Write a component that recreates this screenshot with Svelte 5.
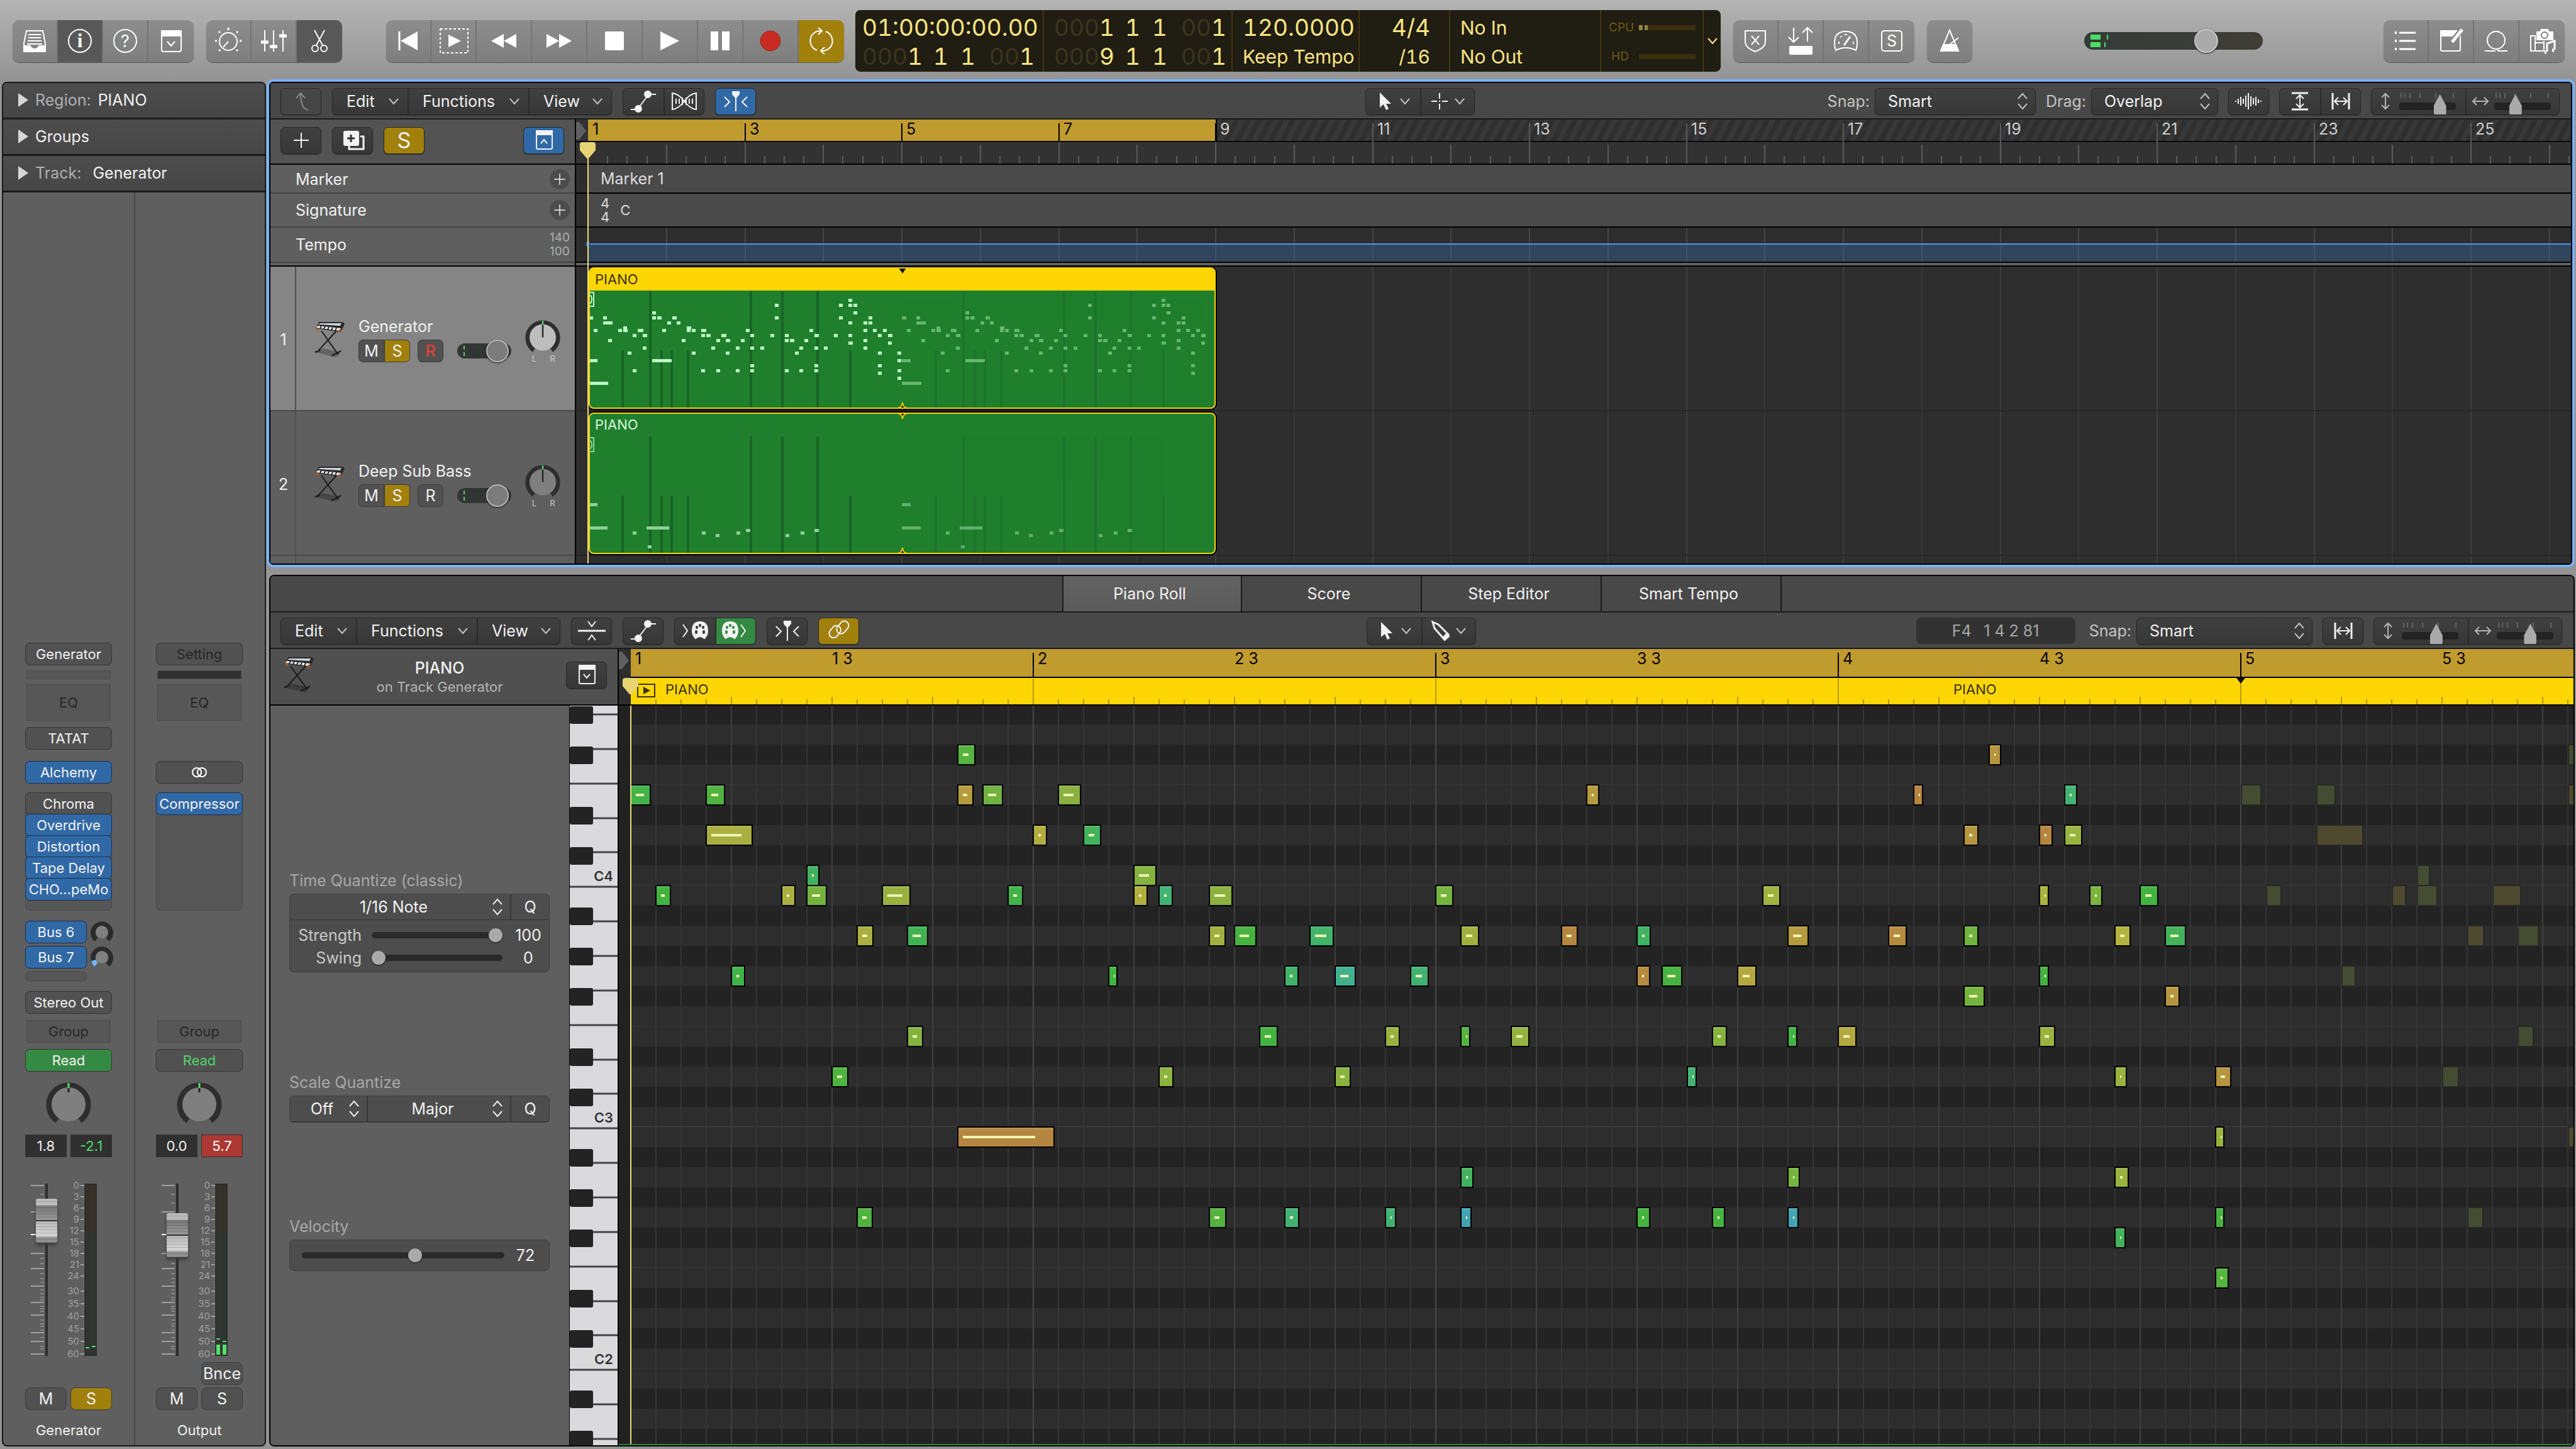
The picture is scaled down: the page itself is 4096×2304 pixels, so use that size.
<script>
  // icon artwork, every icon sits in a 44 x 44 box
  const icons = {
    library: '<path d="M9 6h26l4 20v11q0 2-2 2H7q-2 0-2-2V26z"/><path d="M12 12h20M12 17h20M11 22h22M10 27h24"/><path d="M5 30h10q2 5 7 5t7-5h10v9H5z" fill="currentColor"/>',
    info: '<circle cx="22" cy="22" r="18"/><text x="22" y="32" font-family="Liberation Serif" font-weight="bold" font-size="31">i</text>',
    help: '<circle cx="22" cy="22" r="18"/><text x="22" y="32" font-size="27">?</text>',
    toolbarBox: '<rect x="7" y="6" width="31" height="33" rx="3"/><path d="M7 6h31v8H7z" fill="currentColor"/><path d="M16 23l6 7 6-7"/>',
    smart: '<circle cx="22" cy="23" r="14"/><path d="M22 23l-8 9"/><path d="M22 1v4M7 7l2 2M37 7l-2 2M1 22h3M40 22h3M7 38l2-2M37 38l-2-2" stroke-width="3"/>',
    mixer: '<path d="M8 5v34M22 5v34M37 5v34"/><path d="M2 24h12M16 31h12M31 14h12" stroke-width="5"/>',
    scissors: '<path d="M14 5l13 24M30 5L17 29"/><circle cx="15" cy="34" r="5"/><circle cx="29" cy="34" r="5"/>',
    toStart: '<path d="M8 7v30" stroke-width="3"/><path d="M37 7v30L10 22z" fill="currentColor" stroke="none"/>',
    playFrom: '<rect x="1" y="3" width="44" height="38" stroke-dasharray="4 3"/><path d="M14 12v20l20-10z" fill="currentColor" stroke="none"/>',
    rewind: '<path d="M22 11v22L2 22zM42 11v22L22 22z" fill="currentColor" stroke="none"/>',
    forward: '<path d="M2 11v22l20-11zM22 11v22l20-11z" fill="currentColor" stroke="none"/>',
    stop: '<rect x="7" y="7" width="30" height="30" rx="2" fill="currentColor" stroke="none"/>',
    play: '<path d="M7 7v30l30-15z" fill="currentColor" stroke="none"/>',
    pause: '<path d="M7 7h12v30H7zM25 7h12v30H25z" fill="currentColor" stroke="none"/>',
    record: '<circle cx="22" cy="22" r="16" fill="#c92a22" stroke="#8c2a24" stroke-width="1"/>',
    cycle: '<path d="M15 37a16 16 0 0 1-4-28q4-3 11-3M29 7a16 16 0 0 1 4 28q-4 3-11 3"/><path d="M17 1l6 5-6 6M27 32l-6 6 6 5"/>',
    replace: '<path d="M6 6h32v17q0 10-16 16Q6 33 6 23z"/><path d="M16 14l12 14M28 14L16 28"/>',
    autopunch: '<path d="M11 1v22M3 16l8 8 8-8M33 23V1M25 9l8-8 8 8"/><rect x="4" y="30" width="37" height="14" rx="2" fill="currentColor" stroke="none"/>',
    gauge: '<path d="M6 37q-2-5-2-12 0-18 18-18t18 18q0 7-2 12-7-4-16-4t-16 4z"/><path d="M19 29l10-14" stroke-width="3"/><path d="M10 25h2M33 25h2M14 15l1 1M22 11v2" stroke-width="4"/>',
    soloBox: '<rect x="6" y="6" width="32" height="32" rx="4"/><text x="22" y="31" font-size="25">S</text>',
    metronome: '<path d="M22 5l14 33H8z"/><path d="M12 28h20l4 10H8z" fill="currentColor"/><path d="M22 28L36 17"/>',
    list: '<path d="M12 9h26M12 22h26M12 35h26" stroke-width="3"/><path d="M5 9h3M5 22h3M5 35h3" stroke-width="4"/>',
    notepad: '<path d="M30 6H6v30q0 2 2 2h27q2 0 2-2V14"/><path d="M6 6h25l-7 8H6z" fill="currentColor"/><path d="M40 4L24 24" stroke-width="5"/>',
    loop: '<circle cx="22" cy="21" r="14"/><path d="M4 38h17M40 38H27q-3 0-3-3"/>',
    browser: '<path d="M14 8h5l2-4h10l2 4h6v12H14z" fill="currentColor"/><circle cx="26" cy="13" r="5" stroke="#7d7d7d" fill="currentColor"/><path d="M4 14h7v24H4zM11 25h14M11 38h8M25 22v16H11" /><path d="M30 39V26l12-4v14" stroke-width="3"/><path d="M26 40h3M38 37h3" stroke-width="5"/>',
    up: '<path d="M33 36q-12-2-12-26M14 17l7-8 7 8"/>',
    automation: '<path d="M2 35h10M30 11h12M14 33L29 13"/><circle cx="14" cy="34" r="5" fill="currentColor"/><circle cx="29" cy="11" r="5" fill="currentColor"/>',
    flex: '<path d="M3 9v26q10-1 19-13T41 9v26q-10-1-19-13T3 9z"/><path d="M9 18v8M14 18v8M19 16v12M25 16v12M30 18v8M35 18v8"/>',
    catch: '<path d="M22 14v24M4 15l8 8-8 8M40 15l-8 8 8 8"/><path d="M16 6h12v5l-6 7-6-7z" fill="currentColor" stroke="none"/>',
    plus: '<path d="M22 10v24M10 22h24"/>',
    duplicate: '<rect x="8" y="8" width="23" height="22" rx="2" fill="currentColor"/><path d="M34 16h5v20H16v-5" stroke-width="3"/><path d="M19 13v12M13 19h12" stroke="#333" stroke-width="3"/>',
    panelUp: '<rect x="10" y="7" width="25" height="29" rx="2"/><path d="M10 7h25v6H10z" fill="currentColor"/><path d="M17 27l5-6 5 6"/>',
    panelDown: '<rect x="10" y="7" width="25" height="29" rx="2"/><path d="M10 7h25v6H10z" fill="currentColor"/><path d="M17 21l5 6 5-6"/>',
    pointer: '<path d="M14 8v24l6-5 4 9 4-2-4-8h8z" fill="currentColor" stroke="none"/>',
    cross: '<path d="M22 9v9M22 26v9M9 22h9M26 22h9M21 22h2"/>',
    pencil: '<path d="M9 8l9 4 16 16-7 7-15-17z" stroke-width="3"/><path d="M25 33l7-7 3 5-7 6z" fill="currentColor"/>',
    wave: '<path d="M1 21v2M5 18v8M9 15v14M13 18v8M17 13v18M21 9v26M25 14v16M29 17v10M33 15v14M37 19v6M41 21v2"/>',
    fitV: '<path d="M9 9h26M9 35h26" stroke-width="3"/><path d="M22 12v20M16 18l6-6 6 6M16 26l6 6 6-6"/>',
    fitH: '<path d="M9 9v26M35 9v26" stroke-width="3"/><path d="M12 22h20M18 16l-6 6 6 6M26 16l6 6-6 6"/>',
    arrowV: '<path d="M22 10v24M16 16l6-6 6 6M16 28l6 6 6-6"/>',
    arrowH: '<path d="M10 22h24M16 16l-6 6 6 6M28 16l6 6-6 6"/>',
    collapse: '<path d="M0 22h44" stroke-width="3"/><path d="M16 7l6 8 6-8M16 37l6-8 6 8"/>',
    midiIn: '<path d="M3 12l7 10-7 10"/><path d="M23 34q-5-5-5-12Q18 8 30 8t12 14q0 7-5 12-3-3-7-3t-7 3z" fill="currentColor"/><path d="M24 23v2M36 23v2M25 16v1M35 16v1M30 13v1" stroke="#383838" stroke-width="4" stroke-linecap="round"/>',
    midiOut: '<path d="M30 12l7 10-7 10"/><path d="M6 34q-5-5-5-12Q1 8 13 8t12 14q0 7-5 12-3-3-7-3t-7 3z" fill="currentColor"/><path d="M7 23v2M19 23v2M8 16v1M18 16v1M13 13v1" stroke="#348a43" stroke-width="4" stroke-linecap="round"/>',
    link: '<rect x="5" y="16" width="21" height="14" rx="7" transform="rotate(-50 16 23)"/><rect x="18" y="10" width="22" height="14" rx="7" transform="rotate(-50 28 18)"/>'
  };

  // timeline geometry
  const origin = 19;
  const barWidth = 124.75;
  const step = 40;
  const rowHeight = 32;
  const barX = (n) => Math.round(origin + (n - 1) * barWidth);
  const quarters = Array.from({ length: 102 }, (_, i) => i);
  const bars = Array.from({ length: 26 }, (_, i) => i + 1);
  const steps = Array.from({ length: 78 }, (_, i) => i);
  const rows = Array.from({ length: 37 }, (_, i) => 8 - i);
  const blackKeys = [1, 3, 6, 8, 10];
  const pitchClass = (s) => ((s % 12) + 12) % 12;
  const isBlack = (s) => blackKeys.includes(pitchClass(s));
  const rowTop = (s) => 286 - rowHeight * (s + 1);
  const whiteLines = Array.from({ length: 22 }, (_, i) => Math.round(14 + i * 384 / 7));

  // [step, width, semitones from C4, colour]
  const notes = [
    [0, 33, 4, '#42b347'], [3, 31, 4, '#50b23f'], [3, 75, 2, '#a9ae40'], [1, 25, -1, '#42b340'],
    [6, 23, -1, '#a9ae40'], [7, 21, 0, '#40b25f'], [7, 33, -1, '#74b13f'], [10, 46, -1, '#99b03e'],
    [9, 27, -3, '#a9ae40'], [4, 23, -5, '#42b34a'], [8, 27, -10, '#4fb340'], [9, 26, -17, '#50b240'],
    [11, 34, -3, '#40b253'], [13, 29, 6, '#55b340'], [13, 26, 4, '#b59a3f'], [14, 33, 4, '#6fb23f'],
    [15, 25, -1, '#42b34a'], [16, 23, 2, '#b3ac3f'], [17, 37, 4, '#8ab13f'], [18, 29, 2, '#42b25c'],
    [19, 15, -5, '#42b340'], [20, 37, 0, '#84b13f'], [20, 23, -1, '#b0ae3f'], [21, 23, -1, '#42b275'],
    [23, 38, -1, '#8ab13f'], [23, 27, -3, '#9fb03f'], [24, 36, -3, '#46b340'], [26, 23, -5, '#42b26a'],
    [27, 39, -3, '#42b268'], [28, 34, -5, '#42b08f'], [31, 30, -5, '#42b273'], [32, 29, -1, '#75b33f'],
    [33, 30, -3, '#a0b03f'], [37, 27, -3, '#b5853f'], [38, 21, 4, '#b59a3f'], [40, 23, -3, '#42b265'],
    [40, 22, -5, '#b58b3f'], [41, 33, -5, '#46b340'], [44, 31, -5, '#b5a73f'], [11, 26, -8, '#84b33f'],
    [25, 30, -8, '#42b340'], [30, 24, -8, '#99b23f'], [33, 16, -8, '#55b340'], [35, 30, -8, '#93b23f'],
    [43, 24, -8, '#84b33f'], [21, 24, -10, '#8ab33f'], [28, 26, -10, '#8ab33f'], [42, 16, -10, '#42b373'],
    [13, 155, -13, '#b4863f'], [33, 21, -15, '#42b260'], [23, 28, -17, '#55b33f'], [26, 24, -17, '#42b273'],
    [30, 18, -17, '#42b273'], [33, 18, -17, '#42a3b3'], [40, 22, -17, '#46b340'], [43, 21, -17, '#46b340'],
    [54, 20, 6, '#b5953f'], [51, 16, 4, '#b5853f'], [57, 21, 4, '#42b373'], [53, 24, 2, '#b5953f'],
    [56, 22, 2, '#b5853f'], [57, 29, 2, '#99b33f'], [45, 29, -1, '#9fb33f'], [56, 16, -1, '#a9b33f'],
    [58, 21, -1, '#7cb33f'], [60, 30, -1, '#42b340'], [46, 34, -3, '#b59a3f'], [50, 30, -3, '#b58b3f'],
    [53, 24, -3, '#70b33f'], [59, 26, -3, '#b3b33f'], [61, 34, -3, '#42b35a'], [56, 16, -5, '#42b340'],
    [53, 34, -6, '#75b33f'], [61, 24, -6, '#b5953f'], [46, 16, -8, '#42b345'], [48, 30, -8, '#b3a83f'],
    [56, 26, -8, '#9ab33f'], [59, 20, -10, '#9ab33f'], [63, 26, -10, '#b5953f'], [63, 15, -13, '#9ab33f'],
    [46, 20, -15, '#75b33f'], [59, 23, -15, '#99b33f'], [46, 18, -17, '#42a3b3'], [63, 15, -17, '#46b340'],
    [59, 18, -18, '#42b35a'], [63, 22, -20, '#55b33f']
  ];
  const ghosts = notes.filter((n) => n[0] < 14);
  const ghostColor = (c) => (c[1] > '8' ? '#4e4a30' : '#444c31');

  // small region previews: [x, y, width]
  const preview = notes
    .concat([[38, 0, 9], [51, 0, 9], [53, 0, 11], [53, 0, 9], [54, 0, 9], [0, 70, -13], [0, 154, -22]])
    .map(([st, w, s]) => [Math.round(st * 7.8), 92 - s * 4, Math.max(6, Math.round(w / 5))]);
  const bassPreview = [
    [0, 142, 14], [0, 179, 30], [92, 179, 36], [70, 187, 6], [180, 187, 6], [202, 191, 6],
    [235, 187, 6], [250, 183, 7], [313, 191, 6], [337, 187, 6], [359, 183, 7], [94, 209, 6]
  ];
  const longLines = [98, 258, 308, 364];
  const shortLines = [54, 116, 132, 158, 416];
  const regions = [
    { name: 'PIANO', notes: preview, selected: true },
    { name: 'PIANO', notes: bassPreview, selected: false }
  ];

  const tracks = [
    { number: 1, name: 'Generator', armed: true },
    { number: 2, name: 'Deep Sub Bass', armed: false }
  ];

  const strips = [
    {
      name: 'Generator', setting: 'Generator', midi: 'TATAT', instrument: 'Alchemy',
      inserts: ['Chroma', 'Overdrive', 'Distortion', 'Tape Delay', 'CHO...peMo'],
      sends: ['Bus 6', 'Bus 7'], output: 'Stereo Out', volume: '1.8', peak: '-2.1', level: 88, main: false
    },
    {
      name: 'Output', setting: 'Setting', midi: '', instrument: '',
      inserts: ['Compressor'], sends: [], output: '', volume: '0.0', peak: '5.7', level: 77, main: true
    }
  ];
  const scale = [[0, 3], [3, 21], [6, 39], [9, 57], [12, 75], [15, 93], [18, 111], [21, 129], [24, 147], [30, 171], [35, 191], [40, 211], [45, 231], [50, 251], [60, 271]];
  const faderMajor = [3, 45, 111, 135, 163, 189, 209, 237, 251, 271];
  const faderMinor = [17, 31, 119, 127, 143, 151, 157, 169, 175, 181, 185, 195, 199, 203, 217, 223, 227, 233, 245, 259, 263];
  const meterDots = Array.from({ length: 67 }, (_, i) => 5 + i * 4);

  const transport = [
    ['toStart', 'Go to beginning', 'n'], ['playFrom', 'Play from selection', 'n'], ['rewind', 'Rewind', 'w'],
    ['forward', 'Forward', 'w'], ['stop', 'Stop', 'w'], ['play', 'Play', 'w'], ['pause', 'Pause', 'n'],
    ['record', 'Record', 'w'], ['cycle', 'Cycle', 'n gold']
  ];
  const tabs = ['Piano Roll', 'Score', 'Step Editor', 'Smart Tempo'];
  const rollLabels = [[0, '1'], [8, '1 3'], [16, '2'], [24, '2 3'], [32, '3'], [40, '3 3'], [48, '4'], [56, '4 3'], [64, '5'], [72, '5 3']];
</script>

{#snippet icon(name)}
  <svg class="icon" viewBox="0 0 44 44" aria-hidden="true">{@html icons[name]}</svg>
{/snippet}

{#snippet chevron()}
  <svg class="chevron" viewBox="0 0 16 12" aria-hidden="true"><path d="M1 2l7 8 7-8" /></svg>
{/snippet}

{#snippet updown()}
  <svg class="updown" viewBox="0 0 16 28" aria-hidden="true"><path d="M1 10l7-8 7 8M1 18l7 8 7-8" /></svg>
{/snippet}

{#snippet keyboard()}
  <svg class="keyboard" viewBox="0 0 50 56" aria-hidden="true">
    <path d="M0 48l14-6 28 6-6 8z" fill="#000" opacity=".25" />
    <path d="M12 14l27 38M36 14L5 48M28 54l15-8M2 48l8-3" stroke="#1b1b1b" stroke-width="2" fill="none" />
    <path d="M8 0h38l3 3-6 13L3 10z" fill="#2a2a2a" />
    <path d="M10 2h34l-2 4L7 4z" fill="#cfd3d8" />
    <path d="M6 6l37 4-2 4L4 9z" fill="#f2f2f2" />
    <path d="M12 6l-2 4M18 7l-2 4M24 8l-2 4M30 9l-2 4M36 9l-2 5" stroke="#222" stroke-width="2" />
    <path d="M3 9l1 4 4 1v-4zM39 13l5-3-1 6-5 1z" fill="#a35a2a" />
  </svg>
{/snippet}

{#snippet knob(big)}
  <svg class={big ? 'pan big' : 'pan'} viewBox="0 0 72 72" aria-hidden="true">
    <path d="M18 64A31 31 0 1 1 54 64" fill="none" stroke="#2e2e2e" stroke-width="9" />
    <circle cx="36" cy="38" r="27" class="cap" />
    <path d="M36 4v8" stroke="#53dc6c" stroke-width="3" />
    <path d={big ? 'M36 12v7' : 'M36 12v26'} stroke="#222" stroke-width="3" />
  </svg>
{/snippet}

{#snippet zoomers(a, b)}
  <div class="group zoomers">
    {#each [['arrowV', 'Vertical zoom', a], ['arrowH', 'Horizontal zoom', b]] as [name, label, value]}
      <label class="zoomer">
        {@render icon(name)}
        <span class="zoom-slide">
          <svg class="zoom-ticks" viewBox="0 0 88 10" aria-hidden="true"><path d="M3 0v8M9 0v8M17 0v8M33 0v8M58 0v8M86 0v8" /></svg>
          <input type="range" {value} aria-label={label} />
        </span>
      </label>
    {/each}
  </div>
{/snippet}

{#snippet tools(second)}
  <div class="group">
    <button class="tool" aria-label="Left-click tool">{@render icon('pointer')}{@render chevron()}</button>
    <button class="tool" aria-label="Command-click tool">{@render icon(second)}{@render chevron()}</button>
  </div>
{/snippet}

{#snippet menus()}
  <div class="group menus">
    {#each ['Edit', 'Functions', 'View'] as name}
      <button>{name}{@render chevron()}</button>
    {/each}
  </div>
{/snippet}

<div class="app">
  <header class="toolbar">
    <div class="bar-group">
      <button aria-label="Library">{@render icon('library')}</button>
      <button class="on" aria-label="Inspector">{@render icon('info')}</button>
      <button aria-label="Quick help">{@render icon('help')}</button>
      <button aria-label="Toolbar">{@render icon('toolbarBox')}</button>
    </div>
    <div class="bar-group">
      <button aria-label="Smart controls">{@render icon('smart')}</button>
      <button aria-label="Mixer">{@render icon('mixer')}</button>
      <button class="on" aria-label="Editors">{@render icon('scissors')}</button>
    </div>
    <div class="bar-group transport">
      {#each transport as [name, label, kind]}
        <button class={kind} aria-label={label}>{@render icon(name)}</button>
      {/each}
    </div>

    <div class="lcd">
      <div class="cell time">
        <div>01:00:00:00.00</div>
        <div class="position"><span><i>000</i>1</span><span>1</span><span>1</span><span class="ticks"><i>00</i>1</span></div>
      </div>
      <div class="cell locators">
        <div class="position"><span><i>000</i>1</span><span>1</span><span>1</span><span class="ticks"><i>00</i>1</span></div>
        <div class="position"><span><i>000</i>9</span><span>1</span><span>1</span><span class="ticks"><i>00</i>1</span></div>
      </div>
      <div class="cell tempo"><div>120.0000</div><div class="small">Keep Tempo</div></div>
      <div class="cell meter"><div>4/4</div><div class="small">/16</div></div>
      <div class="cell io"><div class="small">No In</div><div class="small">No Out</div></div>
      <div class="cell load">
        <div><span>CPU</span><b class="used"></b></div>
        <div><span>HD</span><b></b></div>
      </div>
      <button class="lcd-menu" aria-label="Display mode">{@render chevron()}</button>
    </div>

    <div class="bar-group">
      <button aria-label="Replace">{@render icon('replace')}</button>
      <button aria-label="Autopunch">{@render icon('autopunch')}</button>
      <button aria-label="Low latency">{@render icon('gauge')}</button>
      <button aria-label="Solo">{@render icon('soloBox')}</button>
    </div>
    <div class="bar-group">
      <button aria-label="Metronome">{@render icon('metronome')}</button>
    </div>
    <div class="master">
      <span class="level"></span>
      <input type="range" value="71" aria-label="Master volume" />
    </div>
    <div class="bar-group last">
      <button aria-label="List editors">{@render icon('list')}</button>
      <button aria-label="Note pads">{@render icon('notepad')}</button>
      <button aria-label="Loop browser">{@render icon('loop')}</button>
      <button aria-label="Media browser">{@render icon('browser')}</button>
    </div>
  </header>

  <main>
    <aside class="inspector">
      <button class="fold"><span class="tri"></span><em>Region:</em> PIANO</button>
      <button class="fold"><span class="tri"></span>Groups</button>
      <button class="fold"><span class="tri"></span><em>Track:</em>&nbsp;Generator</button>
      <div class="strips">
        {#each strips as strip}
          <section class="strip" class:main={strip.main}>
            <button class="slot" class:muted={strip.main}>{strip.setting}</button>
            <div class="reduction"></div>
            <button class="eq">EQ</button>
            {#if strip.midi}
              <button class="slot midi">{strip.midi}</button>
              <button class="slot blue instrument">{strip.instrument}</button>
            {:else}
              <button class="slot instrument stereo" aria-label="Stereo format">
                <svg viewBox="0 0 26 18"><circle cx="9" cy="9" r="7" /><circle cx="17" cy="9" r="7" /></svg>
              </button>
            {/if}
            <div class="inserts">
              {#each strip.inserts as insert}
                <button class="slot" class:blue={insert !== 'Chroma'}>{insert}</button>
              {/each}
            </div>
            <div class="sends">
              {#each strip.sends as send, i}
                <div class="send">
                  <button class="slot blue">{send}</button>
                  <svg viewBox="0 0 36 36" aria-hidden="true">
                    <path d="M9 30A14 14 0 1 1 27 30" fill="none" stroke="#2b2b2b" stroke-width="8" />
                    {#if i === 1}<path d="M9 30A14 14 0 0 1 5 23" fill="none" stroke="#72b4fb" stroke-width="8" />{/if}
                    <circle cx="18" cy="18" r="10" fill="#808080" />
                  </svg>
                </div>
              {/each}
              {#if strip.sends.length}<div class="empty-send"></div>{/if}
            </div>
            <div class="out">{#if strip.output}<button class="slot">{strip.output}</button>{/if}</div>
            <button class="group-slot">Group</button>
            <button class="slot read">Read</button>
            {@render knob(true)}
            <div class="pair values">
              <output>{strip.volume}</output>
              <output class="peak">{strip.peak}</output>
            </div>
            <div class="fader">
              <svg class="fader-scale" viewBox="0 0 138 274" aria-hidden="true">
                {#each faderMajor as y}<path d="M9 {y}h21" stroke="#a0a0a0" />{/each}
                {#each faderMinor as y}<path d="M24 {y}h6" stroke="#868686" />{/each}
                <path d="M9 81h21" stroke="#fff" />
                <rect x="32" y="0" width="4" height="274" fill="#2c2c2c" />
                {#each scale as [n, y]}
                  <text x="86" y={y + 5}>{n}</text>
                  <path d="M88 {y}h6" stroke="#a0a0a0" />
                {/each}
                {#each meterDots as y}<path d="M92 {y}h2" stroke="#8c8c8c" stroke-width="1" />{/each}
                <rect x="94" y="0" width="20" height="274" fill="#2d2d2d" />
                <rect x="96" y="2" width="16" height="76" fill="#353128" />
                <rect x="96" y="78" width="16" height="194" fill="#303532" />
                {#if strip.main}
                  <path d="M96 247h6M106 251h6" stroke="#53e06c" />
                  <path d="M96 256h6v16h-6zM106 256h6v16h-6z" fill="#53e06c" />
                {:else}
                  <path d="M96 261h6M106 259h6" stroke="#53e06c" />
                {/if}
              </svg>
              <input type="range" value={strip.level} aria-label="{strip.name} volume" />
            </div>
            <div class="bounce">{#if strip.main}<button class="key">Bnce</button>{/if}</div>
            <div class="pair">
              <button class="key">M</button>
              <button class="key" class:gold={!strip.main}>S</button>
            </div>
            <div class="strip-name">{strip.name}</div>
          </section>
        {/each}
      </div>
    </aside>

    <div class="work">
      <section class="arrange">
        <div class="menubar">
          <div class="side">
            <button class="sq dim" aria-label="Leave folder">{@render icon('up')}</button>
            {@render menus()}
            <div class="group">
              <button class="sq" aria-label="Automation">{@render icon('automation')}</button>
              <button class="sq" aria-label="Flex">{@render icon('flex')}</button>
            </div>
            <button class="sq blue" aria-label="Catch playhead">{@render icon('catch')}</button>
          </div>
          {@render tools('cross')}
          <div class="side right">
            <label class="pick">Snap:
              <span class="select-wrap snap-wide"><select><option>Smart</option></select>{@render updown()}</span>
            </label>
            <label class="pick">Drag:
              <span class="select-wrap drag-wide"><select><option>Overlap</option></select>{@render updown()}</span>
            </label>
            <button class="sq" aria-label="Waveform zoom">{@render icon('wave')}</button>
            <div class="group">
              <button class="sq" aria-label="Fit vertically">{@render icon('fitV')}</button>
              <button class="sq" aria-label="Fit horizontally">{@render icon('fitH')}</button>
            </div>
            {@render zoomers(78, 34)}
          </div>
        </div>

        <div class="arrange-body">
          <div class="heads">
            <div class="head-tools">
              <button class="sq" aria-label="Add track">{@render icon('plus')}</button>
              <button class="sq" aria-label="Duplicate track">{@render icon('duplicate')}</button>
              <button class="sq gold letter">S</button>
              <button class="sq blue end" aria-label="Global tracks">{@render icon('panelUp')}</button>
            </div>
            <div class="global marker">Marker<button class="add" aria-label="Add marker">{@render icon('plus')}</button></div>
            <div class="global signature">Signature<button class="add" aria-label="Add signature">{@render icon('plus')}</button></div>
            <div class="global tempo-head">Tempo<span>140<br />100</span></div>
            <div class="split"></div>
            {#each tracks as track}
              <div class="track" class:selected={track.armed}>
                <div class="number">{track.number}</div>
                {@render keyboard()}
                <div class="track-main">
                  <div>{track.name}</div>
                  <div class="track-keys">
                    <button>M</button><button class="gold">S</button><button class="rec">R</button>
                    <span class="mini-volume"><input type="range" value="92" aria-label="{track.name} level" /></span>
                  </div>
                </div>
                <div class="track-pan">{@render knob(false)}<span>L</span><span>R</span></div>
              </div>
            {/each}
            <div class="track-rest"></div>
          </div>

          <div class="timeline">
            <div class="ruler">
              <div class="gutter"></div>
              <div class="cycle"></div>
              <div class="hatch"></div>
              <svg class="cover">
                {#each quarters as q}
                  {@const x = Math.round(origin + q * barWidth / 4)}
                  {#if q % 8 === 0}
                    <path d="M{x} {q <= 32 ? 36 : 6}V70" stroke="#5a5a5a" />
                    {#if q > 0 && q <= 32}<path d="M{x} 6V34" stroke="#000" />{/if}
                  {:else}
                    <path d="M{x} {q % 4 === 0 ? 40 : 58}V70" stroke="#5a5a5a" />
                  {/if}
                {/each}
              </svg>
              {#each bars.filter((b) => b % 2) as b}
                <span class="bar-no" class:in-cycle={b < 9} style="left: {barX(b) + 7}px">{b}</span>
              {/each}
              <i class="start-flag"></i>
            </div>
            <div class="lane marker"><div class="event">Marker 1</div></div>
            <div class="lane signature"><div class="event"><span class="sig">4<br />4</span>C</div></div>
            <div class="lane tempo-lane">
              <svg class="cover">
                {#each bars as b}<path d="M{barX(b)} 0V56" stroke="#444" />{/each}
                <rect x={origin} y="26" width="100%" height="28" fill="#3a6aa8" opacity=".4" />
                <path d="M{origin} 26H4000" stroke="#4a96ee" />
                <circle cx={origin} cy="26" r="4" fill="#2c5b94" />
              </svg>
            </div>
            <div class="split"></div>
            <div class="lanes">
              <svg class="cover">
                {#each bars as b}<path d="M{barX(b)} 0V500" stroke={b % 2 ? '#3f3f3f' : '#383838'} />{/each}
                <path d="M0 229H4000M0 459H4000" stroke="#262626" />
              </svg>
              {#each regions as region, i}
                <div class="region" class:selected={region.selected} class:second={i === 1}>
                  <div class="region-name">{region.name}</div>
                  <svg class="cover">
                    {#each [-2, 496] as dx}
                      <g opacity={dx > 0 ? 0.35 : 1} stroke="#186425" stroke-width="4">
                        {#each longLines as x}<path d="M{x + dx} 36V221" />{/each}
                        {#each shortLines as x}<path d="M{x + dx} 130V221" />{/each}
                      </g>
                      <g opacity={dx > 0 ? (i ? 0.6 : 0.45) : 1} fill={i ? '#8fd096' : '#bdfcc4'}>
                        {#each region.notes.filter((n) => dx < 0 || n[0] < 490) as [x, y, w]}<rect x={x + dx} y={y} width={w} height="5" />{/each}
                      </g>
                    {/each}
                    <rect x="-12" y="38" width="18" height="22" fill="none" stroke={i ? '#8fd096' : '#bdfcc4'} />
                    <ellipse cx="-1" cy="49" rx="4" ry="7" fill="none" stroke={i ? '#8fd096' : '#bdfcc4'} />
                    <path d="M491 -1h12l-6 9zM491 222h12l-6-9z" fill="#111" />
                    <path d={i ? 'M489 -1q7 1 8 9 1-8 8-9M489 222q7-1 8-9 1 8 8 9' : 'M489 222q7-1 8-9 1 8 8 9'} fill="none" stroke="#f7d30b" />
                  </svg>
                </div>
              {/each}
            </div>
            <div class="playhead low"></div>
          </div>
        </div>
      </section>

      <section class="editor">
        <div class="tabs">
          {#each tabs as tab, i}
            <button class:active={i === 0}>{tab}</button>
          {/each}
        </div>
        <div class="menubar">
          <div class="side">
            {@render menus()}
            <button class="sq" aria-label="Collapse mode">{@render icon('collapse')}</button>
            <button class="sq" aria-label="Automation">{@render icon('automation')}</button>
            <div class="group">
              <button class="sq" aria-label="MIDI in">{@render icon('midiIn')}</button>
              <button class="sq green" aria-label="MIDI out">{@render icon('midiOut')}</button>
            </div>
            <button class="sq" aria-label="Catch playhead">{@render icon('catch')}</button>
            <button class="sq gold" aria-label="Link">{@render icon('link')}</button>
          </div>
          {@render tools('pencil')}
          <div class="side right">
            <div class="info">F4&ensp; 1 4 2 81</div>
            <label class="pick">Snap:
              <span class="select-wrap roll-wide"><select><option>Smart</option></select>{@render updown()}</span>
            </label>
            <button class="sq" aria-label="Fit horizontally">{@render icon('fitH')}</button>
            {@render zoomers(64, 62)}
          </div>
        </div>

        <div class="roll-head">
          <div class="region-info">
            {@render keyboard()}
            <div class="region-title"><strong>PIANO</strong><span>on Track Generator</span></div>
            <button class="sq" aria-label="Region inspector">{@render icon('panelDown')}</button>
          </div>
          <div class="roll-ruler">
            <div class="roll-cycle">
              {#each rollLabels as [at, text]}
                <span class="bar-no in-cycle" style="left: {origin + at * step + (at % 16 ? 0 : 7)}px">{text}</span>
              {/each}
            </div>
            <div class="roll-region">
              <span class="play-box"></span><span>PIANO</span><span class="again">PIANO</span>
            </div>
            <svg class="cover">
              {#each steps as n}
                {@const x = origin + n * step}
                {#if n > 0 && n % 16 === 0}
                  <path d="M{x} 6V45" stroke="#000" />
                  <path d="M{x} 47V88" stroke="#b8990f" />
                {:else if n > 0}
                  <path d="M{x} {n % 4 === 0 ? 76 : 80}V88" stroke="#b8990f" />
                {/if}
              {/each}
              <path d="M{origin + 64 * step - 7} 46h14l-7 9z" fill="#111" />
            </svg>
            <i class="start-flag"></i>
          </div>
        </div>

        <div class="roll-body">
          <div class="local">
            <h3>Time Quantize (classic)</h3>
            <div class="box">
              <div class="box-row">
                <span class="select-wrap grow"><select aria-label="Time quantize"><option>1/16 Note</option></select>{@render updown()}</span>
                <button>Q</button>
              </div>
              <label class="param first"><span>Strength</span><input type="range" value="100" /><output>100</output></label>
              <label class="param"><span>Swing</span><input type="range" value="0" /><output>0</output></label>
            </div>
            <h3>Scale Quantize</h3>
            <div class="box">
              <div class="box-row">
                <span class="select-wrap off"><select aria-label="Scale quantize"><option>Off</option></select>{@render updown()}</span>
                <span class="select-wrap grow"><select aria-label="Scale"><option>Major</option></select>{@render updown()}</span>
                <button>Q</button>
              </div>
            </div>
            <h3>Velocity</h3>
            <div class="box velocity">
              <input type="range" min="0" max="128" value="72" aria-label="Velocity" /><output>72</output>
            </div>
          </div>

          <svg class="piano">
            <rect width="100%" height="100%" fill="#dadadd" />
            {#each whiteLines as y}<path d="M0 {y}h77" stroke="#444" stroke-width="3" />{/each}
            {#each rows.filter(isBlack) as s}
              <rect x="0" y={rowTop(s) + 3} width="37" height="28" rx="3" fill="#232323" />
            {/each}
            {#each [0, -12, -24] as s, i}
              <text x="69" y={rowTop(s) + 25}>C{4 - i}</text>
            {/each}
          </svg>

          <div class="roll">
            <svg class="cover">
              {#each rows as s}
                <rect x="0" y={rowTop(s)} width="100%" height={rowHeight} fill={isBlack(s) ? '#232323' : '#2d2d2d'} />
                {#if pitchClass(s) === 0 || pitchClass(s) === 5}
                  <path d="M0 {rowTop(s) + rowHeight}H4000" stroke={s === -12 ? '#464646' : '#353535'} />
                {/if}
              {/each}
              {#each steps as n}
                <path d="M{origin + n * step} 0V1400" stroke={n % 16 === 0 ? '#484848' : n % 4 === 0 ? '#404040' : '#353535'} />
              {/each}
              <rect x="0" y="0" width={origin} height="100%" fill="#222" />
            </svg>
            {#each ghosts as [at, width, s, color]}
              <div class="note ghost" style="left: {origin + (at + 64) * step}px; top: {rowTop(s) - 1}px; width: {width}px; background: {ghostColor(color)}"></div>
            {/each}
            {#each notes as [at, width, s, color]}
              <div class="note" style="left: {origin + at * step - 1}px; top: {rowTop(s) - 1}px; width: {width}px; background-color: {color}">
                <i style="width: {Math.max(2, Math.round((width - 18) * 0.84))}px"></i>
              </div>
            {/each}
            <div class="playhead"></div>
          </div>
        </div>
      </section>
    </div>
  </main>
</div>

<style>
  :global(body) {
    margin: 0;
    background: #949494;
  }

  .app {
    height: 100vh;
    display: flex;
    flex-direction: column;
    overflow: hidden;
    background: #949494;
    color: #f2f2f2;
    font-family: Inter, "Liberation Sans", sans-serif;
    font-size: 25px;
    line-height: 30px;
  }

  .app * {
    box-sizing: border-box;
  }

  button,
  select,
  input {
    font: inherit;
    color: inherit;
    margin: 0;
    padding: 0;
    border: 0;
    background: none;
  }

  button {
    display: flex;
    align-items: center;
    justify-content: center;
    white-space: nowrap;
  }

  .icon {
    flex: none;
    width: 44px;
    height: 44px;
    overflow: visible;
    fill: none;
    stroke: currentColor;
    stroke-width: 2;
  }

  .icon :global(text) {
    fill: currentColor;
    stroke: none;
    text-anchor: middle;
  }

  .chevron,
  .updown {
    flex: none;
    width: 16px;
    height: 12px;
    fill: none;
    stroke: #c0c0c0;
    stroke-width: 2;
  }

  .updown {
    height: 28px;
  }

  .cover {
    position: absolute;
    inset: 0;
    width: 100%;
    height: 100%;
    stroke-width: 2;
  }

  .gold {
    background: #a1800c !important;
  }

  .blue {
    background: #3169a6 !important;
  }

  .green {
    background: #348a43 !important;
  }

  /* top toolbar */
  .toolbar {
    flex: none;
    display: flex;
    align-items: center;
    height: 130px;
    margin-bottom: -4px;
    padding: 0 18px 0 20px;
    background: linear-gradient(#b4b4b4, #939393);
  }

  .bar-group {
    display: flex;
    height: 67px;
    margin-right: 20px;
    border-radius: 10px;
    overflow: hidden;
    background: linear-gradient(#8d8d8d, #7e7e7e);
    box-shadow: 0 1px 1px #555;
  }

  .bar-group button {
    width: 72px;
    color: #fff;
    border-right: 2px solid #747474;
  }

  .bar-group button:last-child {
    border-right: 0;
  }

  .bar-group .on {
    background: #585858;
  }

  .bar-group.transport {
    margin: 0 18px 0 50px;
  }

  .bar-group .w {
    width: 88px;
  }

  .bar-group.last {
    margin-right: 0;
  }

  .lcd {
    display: flex;
    width: 1376px;
    height: 98px;
    margin-right: 20px;
    border-radius: 8px;
    background: #201d12;
    color: #fee683;
    font-size: 37px;
    line-height: 46px;
    font-variant-numeric: tabular-nums;
    overflow: hidden;
  }

  .cell {
    padding: 5px 0 1px 16px;
    border-right: 2px solid #44370f;
    white-space: nowrap;
  }

  .cell i {
    font-style: normal;
    color: #3b3520;
  }

  .small {
    font-size: 30px;
  }

  .time {
    width: 300px;
    padding-left: 11px;
  }

  .locators {
    width: 300px;
  }

  .tempo {
    width: 202px;
  }

  .meter {
    width: 144px;
    padding-right: 30px;
    text-align: right;
  }

  .io {
    width: 240px;
  }

  .load {
    width: 163px;
    padding-left: 12px;
  }

  .load div {
    display: flex;
    align-items: center;
    gap: 12px;
    font-size: 19px;
    color: #6f5a14;
  }

  .load span {
    width: 36px;
    text-align: center;
  }

  .load b {
    width: 90px;
    height: 8px;
    background: #3c2f10;
  }

  .load .used {
    background: linear-gradient(90deg, #94853e 6px, #201d12 6px 9px, #94853e 9px 14px, #3c2f10 14px);
  }

  .position {
    display: flex;
  }

  .position span {
    width: 43px;
    text-align: right;
  }

  .position span:first-child {
    width: 94px;
  }

  .position .ticks {
    width: 94px;
  }

  .lcd-menu {
    flex: 1;
  }

  .lcd-menu .chevron {
    stroke: #fee683;
  }

  .master {
    position: relative;
    width: 284px;
    height: 28px;
    margin: 0 auto 0 158px;
    border-radius: 14px;
    background: linear-gradient(90deg, #343b36, #3a3d3a 60%, #403d33);
  }

  .level {
    position: absolute;
    left: 10px;
    top: 4px;
    width: 28px;
    height: 20px;
    background:
      linear-gradient(#4cdc68, #4cdc68) 0 0 / 16px 8px no-repeat,
      linear-gradient(#4cdc68, #4cdc68) 0 12px / 16px 8px no-repeat,
      linear-gradient(#4cdc68, #4cdc68) 26px 0 / 2px 8px no-repeat,
      linear-gradient(#4cdc68, #4cdc68) 22px 12px / 2px 8px no-repeat;
  }

  input[type="range"] {
    appearance: none;
    display: block;
    min-width: 0;
    height: 10px;
    border-radius: 5px;
    background: #2a2a2a;
  }

  input[type="range"]::-webkit-slider-thumb {
    appearance: none;
    width: 22px;
    height: 22px;
    border-radius: 50%;
    background: #aaa;
    box-shadow: 0 1px 3px #222;
  }

  .master input {
    position: relative;
    width: 284px;
    height: 28px;
    background: transparent;
  }

  .master input::-webkit-slider-thumb {
    width: 38px;
    height: 38px;
    border: 2px solid #c8c8c8;
    background: #aaa;
  }

  main {
    flex: 1;
    min-height: 0;
    display: flex;
    gap: 1px;
    padding: 0 2px 4px 3px;
  }

  /* inspector */
  .inspector {
    flex: none;
    display: flex;
    flex-direction: column;
    width: 420px;
    margin-top: 4px;
    border: 2px solid #181818;
    border-radius: 8px;
    overflow: hidden;
    background: #5f5f5f;
  }

  .fold {
    flex: none;
    justify-content: flex-start;
    gap: 11px;
    height: 58px;
    padding: 0 24px 2px;
    border-bottom: 3px solid #1a1a1a;
    background: linear-gradient(#4d4d4d, #464646);
  }

  .fold em {
    font-style: normal;
    color: #b0b0b0;
  }

  .tri {
    border-left: 16px solid #d6d6d6;
    border-top: 11px solid transparent;
    border-bottom: 11px solid transparent;
  }

  .strips {
    flex: 1;
    display: flex;
    font-size: 22px;
    line-height: 28px;
  }

  .strip {
    flex: 1;
    display: flex;
    flex-direction: column;
    align-items: center;
    justify-content: flex-end;
    padding-bottom: 10px;
  }

  .strip:first-child {
    box-shadow: 2px 0 #484848;
  }

  .slot {
    flex: none;
    width: 138px;
    height: 36px;
    border: 1px solid #343434;
    border-radius: 7px;
    background: #515151;
  }

  .slot.blue {
    border-color: #172f4c;
  }

  .muted,
  .eq,
  .group-slot {
    color: #262626;
  }

  .reduction,
  .eq,
  .group-slot {
    flex: none;
    width: 134px;
    border: 1px solid #4a4a4a;
    border-radius: 2px;
    background: #575757;
  }

  .reduction {
    height: 14px;
    margin: 8px 0;
  }

  .main .reduction {
    background: #303030;
  }

  .eq {
    height: 58px;
  }

  .midi {
    margin-top: 10px;
  }

  .instrument {
    margin: 18px 0 14px;
  }

  .stereo {
    margin-top: 64px;
  }

  .stereo svg {
    width: 26px;
    height: 18px;
    fill: none;
    stroke: #fff;
    stroke-width: 2;
  }

  .inserts {
    flex: none;
    display: flex;
    flex-direction: column;
    width: 138px;
    height: 188px;
    border: 1px solid #4a4a4a;
    border-radius: 7px;
    background: #565656;
  }

  .inserts .slot {
    margin: -1px;
  }

  .sends {
    flex: none;
    width: 138px;
    height: 96px;
    margin: 16px 0;
  }

  .send {
    display: flex;
    gap: 6px;
    height: 36px;
    margin-bottom: 4px;
  }

  .send .slot {
    width: 98px;
  }

  .send svg {
    flex: none;
    width: 36px;
    height: 36px;
  }

  .empty-send {
    width: 98px;
    height: 16px;
    border: 1px solid #4a4a4a;
    border-radius: 6px;
    background: #565656;
  }

  .out {
    flex: none;
    height: 36px;
  }

  .group-slot {
    height: 36px;
    margin: 10px 0;
  }

  .read {
    margin-bottom: 14px;
    background: #348a43;
  }

  .main .read {
    background: #515151;
    color: #53d469;
  }

  .pan {
    flex: none;
    width: 56px;
    height: 56px;
    fill: #7f7f7f;
  }

  .pan.big {
    width: 72px;
    height: 72px;
  }

  .pair {
    display: flex;
    gap: 6px;
  }

  .values {
    margin: 14px 0 42px;
  }

  .values output {
    width: 66px;
    height: 36px;
    line-height: 36px;
    text-align: center;
    background: #303030;
  }

  .values .peak {
    color: #53dc6c;
  }

  .main .values .peak {
    background: #ac3833;
    border: 1px solid #333;
    color: #fff;
    line-height: 34px;
  }

  .fader {
    flex: none;
    position: relative;
    width: 138px;
    height: 274px;
  }

  .fader-scale {
    width: 138px;
    height: 274px;
    overflow: visible;
    fill: none;
    stroke-width: 2;
  }

  .fader-scale text {
    fill: #a0a0a0;
    font-size: 15px;
    text-anchor: end;
  }

  .fader input {
    position: absolute;
    left: 17px;
    top: 0;
    width: 34px;
    height: 274px;
    writing-mode: vertical-lr;
    direction: rtl;
    background: transparent;
  }

  .fader input::-webkit-slider-thumb {
    width: 34px;
    height: 70px;
    border-radius: 3px;
    box-shadow: 0 4px 5px #3c3c3c;
    background:
      linear-gradient(transparent 34px, #333 34px 36px, transparent 36px),
      repeating-linear-gradient(transparent 0 4px, rgb(0 0 0 / 15%) 4px 5px),
      linear-gradient(#bbb 9px, #ddd 9px 10px, #777 11px, #999 34px, #bbb 36px, #d5d5d5 59px, #eee 60px, #909090 61px);
  }

  .bounce {
    flex: none;
    display: flex;
    justify-content: flex-end;
    width: 138px;
    height: 50px;
    padding: 10px 0 4px;
  }

  .key {
    width: 66px;
    height: 36px;
    border: 1px solid #3c3c3c;
    border-radius: 8px;
    background: #515151;
    font-size: 25px;
  }

  .strip-name {
    margin-top: 18px;
  }

  /* shared window bits */
  .work {
    flex: 1;
    min-width: 0;
    display: flex;
    flex-direction: column;
    gap: 12px;
  }

  .menubar {
    flex: none;
    display: grid;
    grid-template-columns: 1fr auto 1fr;
    align-items: center;
    height: 58px;
    padding: 2px 18px 0 16px;
    border-bottom: 2px solid #1a1a1a;
    background: #484848;
  }

  .side {
    display: flex;
    align-items: center;
    gap: 17px;
  }

  .right {
    justify-content: flex-end;
    gap: 16px;
  }

  .group,
  .sq,
  .select-wrap {
    display: flex;
    height: 43px;
    border: 1px solid #272727;
    border-radius: 7px;
    background: linear-gradient(#404040, #373737);
    box-shadow: 0 1px 1px #333;
  }

  .sq {
    flex: none;
    width: 65px;
  }

  .group {
    overflow: hidden;
  }

  .group > * {
    border: 0;
    border-radius: 0;
    box-shadow: none;
    height: 41px;
  }

  .group > * + * {
    border-left: 2px solid #2b2b2b;
  }

  .group > .sq {
    width: 64px;
  }

  .dim {
    background: #464646;
    color: #8a8a8a;
  }

  .menus {
    display: grid;
    grid-template-columns: 119px 192px 132px;
  }

  .menus button {
    justify-content: space-between;
    padding: 0 14px 0 22px;
  }

  .tool {
    width: 86px;
    gap: 2px;
    padding-right: 8px;
  }

  .pick {
    display: flex;
    align-items: center;
    gap: 8px;
    color: #c4c4c4;
  }

  .select-wrap {
    align-items: center;
    color: #f2f2f2;
    padding-right: 12px;
  }

  .select-wrap select {
    appearance: none;
    flex: 1;
    min-width: 0;
    height: 40px;
    padding-left: 20px;
    outline: 0;
  }

  .snap-wide {
    width: 256px;
  }

  .drag-wide {
    width: 202px;
  }

  .roll-wide {
    width: 280px;
  }

  .zoomer {
    display: flex;
    align-items: center;
    width: 149px;
    color: #b5b5b5;
  }

  .zoom-slide {
    width: 90px;
  }

  .zoom-ticks {
    display: block;
    width: 88px;
    height: 10px;
    margin-bottom: 5px;
    stroke: #8a8a8a;
    stroke-width: 1;
  }

  .zoomer input {
    width: 90px;
    height: 12px;
    border-radius: 4px;
    background: #232323;
  }

  .zoomer input::-webkit-slider-thumb {
    width: 20px;
    height: 42px;
    margin-top: -14px;
    border-radius: 0 0 4px 4px;
    clip-path: polygon(50% 22%, 100% 66%, 100% 100%, 0 100%, 0 66%);
    box-shadow: none;
  }

  /* arrange window */
  .arrange {
    flex: none;
    display: flex;
    flex-direction: column;
    height: 776px;
    padding: 2px;
    border: 4px solid #78b3f8;
    border-radius: 10px;
    background: #000;
  }

  .arrange-body {
    flex: 1;
    min-height: 0;
    display: grid;
    grid-template-columns: 486px 1fr;
  }

  .heads {
    display: flex;
    flex-direction: column;
    border-right: 2px solid #000;
    background: #5f5f5f;
  }

  .head-tools {
    flex: none;
    display: flex;
    align-items: center;
    gap: 17px;
    height: 72px;
    padding: 0 17px 4px 16px;
    border-bottom: 2px solid #000;
    background: #535353;
  }

  .head-tools .end {
    margin-left: auto;
  }

  .letter {
    font-size: 34px;
  }

  .global {
    display: flex;
    align-items: center;
    justify-content: space-between;
    padding: 2px 8px 0 40px;
    border-bottom: 2px solid #444;
  }

  .marker {
    flex: none;
    height: 46px;
  }

  .signature {
    flex: none;
    height: 54px;
  }

  .global.signature,
  .global.tempo-head {
    padding-top: 0;
  }

  .tempo-head,
  .tempo-lane {
    flex: none;
    height: 56px;
  }

  .tempo-head span {
    font-size: 19px;
    line-height: 22px;
    color: #b0b0b0;
  }

  .add {
    width: 32px;
    height: 32px;
    border-radius: 50%;
    background: #4c4c4c;
  }

  .add .icon {
    width: 32px;
    height: 32px;
  }

  .split {
    flex: none;
    height: 6px;
    border-bottom: 2px solid #000;
    background: #616161;
  }

  .track {
    flex: none;
    display: flex;
    align-items: center;
    height: 230px;
    padding-top: 4px;
    border-bottom: 2px solid #4a4a4a;
    background: linear-gradient(90deg, transparent 39px, #505050 39px 41px, transparent 41px) #5f5f5f;
  }

  .track.selected {
    background-color: #858585;
  }

  .number {
    width: 41px;
    text-align: center;
  }

  .keyboard {
    flex: none;
    width: 50px;
    height: 56px;
  }

  .track .keyboard {
    margin: 0 21px 0 28px;
  }

  .track-keys {
    display: flex;
    align-items: center;
    margin-top: 6px;
  }

  .track-keys button {
    width: 41px;
    height: 36px;
    border: 1px solid #3c3c3c;
    border-radius: 7px 0 0 7px;
    background: #515151;
  }

  .track-keys .gold {
    border-radius: 0 7px 7px 0;
  }

  .track-keys .rec {
    margin: 0 22px 0 12px;
    border-radius: 7px;
  }

  .selected .rec {
    color: #ff3b30;
  }

  .mini-volume {
    width: 86px;
    height: 24px;
    border-radius: 12px;
    background:
      linear-gradient(#53d469, #53d469) 10px 4px / 2px 6px no-repeat,
      linear-gradient(#53d469, #53d469) 10px 14px / 2px 6px no-repeat,
      #323633;
  }

  .mini-volume input {
    width: 86px;
    height: 24px;
    background: transparent;
  }

  .mini-volume input::-webkit-slider-thumb {
    width: 36px;
    height: 36px;
    border: 2px solid #b5b5b5;
    background: #7c7c7c;
  }

  .track-pan {
    display: grid;
    grid-template-columns: 1fr 1fr;
    width: 58px;
    padding-top: 4px;
    margin-left: auto;
    margin-right: 21px;
    font-size: 13px;
    line-height: 14px;
    text-align: center;
    color: #ccc;
  }

  .track-pan .pan {
    grid-column: span 2;
  }

  .selected .pan {
    fill: #bdbdbd;
  }

  .track-rest {
    flex: 1;
    background: linear-gradient(90deg, transparent 39px, #505050 39px 41px, transparent 41px);
  }

  .timeline {
    position: relative;
    display: flex;
    flex-direction: column;
    overflow: hidden;
    min-width: 0;
    background: #2d2d2d;
  }

  .ruler {
    flex: none;
    position: relative;
    display: grid;
    grid-template-columns: 19px 998px 1fr;
    grid-template-rows: 36px 36px;
    height: 72px;
    border-bottom: 2px solid #000;
    background: #323232;
  }

  .gutter,
  .cycle,
  .hatch {
    border-bottom: 2px solid #0c0c0c;
  }

  .cycle {
    background: #c09b2d;
  }

  .hatch {
    border-left: 2px solid #000;
    background: repeating-linear-gradient(117deg, #383838 0 8px, #2f2f2f 8px 16px);
  }

  .bar-no {
    position: absolute;
    top: 0;
    color: #cfcfcf;
    white-space: nowrap;
  }

  .in-cycle {
    color: #000;
  }

  .start-flag {
    position: absolute;
    left: 0;
    top: 4px;
    width: 16px;
    height: 28px;
    background: #606060;
    clip-path: polygon(0 0, 30% 0, 100% 50%, 30% 100%, 0 100%);
  }

  .lane {
    position: relative;
    padding-left: 19px;
    border-bottom: 2px solid #000;
  }

  .event {
    display: flex;
    align-items: center;
    gap: 17px;
    height: 100%;
    padding-left: 20px;
    background: #4a4a4a;
    color: #dcdcdc;
  }

  .signature .event {
    font-size: 22px;
  }

  .sig {
    font-size: 22px;
    line-height: 22px;
  }

  .lanes {
    flex: 1;
    position: relative;
    overflow: hidden;
    background: #2e2e2e;
  }

  .region {
    position: absolute;
    left: 20px;
    top: 1px;
    width: 997px;
    height: 225px;
    border: 2px solid #f7d30b;
    border-radius: 8px;
    background: #1f7f2d;
    box-shadow: 0 0 0 2px #000;
    overflow: hidden;
  }

  .region.second {
    top: 232px;
  }

  .region-name {
    height: 35px;
    padding: 2px 8px;
    font-size: 22px;
    color: #d8f5da;
  }

  .region.selected .region-name {
    background: #fed604;
    color: #3a3200;
  }

  .playhead {
    position: absolute;
    left: 18px;
    top: 0;
    bottom: 0;
    width: 2px;
    background: #ecdc7e;
  }

  .playhead.low {
    top: 36px;
  }

  .playhead.low::before,
  .roll-ruler::after {
    content: "";
    position: absolute;
    left: -12px;
    top: 0;
    width: 25px;
    height: 26px;
    background: #e8d472;
    border-radius: 4px;
    clip-path: polygon(0 0, 100% 0, 100% 50%, 55% 100%, 45% 100%, 0 50%);
  }

  /* editor window */
  .editor {
    flex: 1;
    min-height: 0;
    display: flex;
    flex-direction: column;
    margin-left: 4px;
    border: 2px solid #000;
    border-radius: 8px;
    overflow: hidden;
  }

  .tabs {
    flex: none;
    display: flex;
    justify-content: center;
    height: 58px;
    border-bottom: 2px solid #1a1a1a;
    background: #484848;
  }

  .tabs button {
    width: 286px;
    padding-right: 8px;
    border-right: 2px solid #1a1a1a;
  }

  .tabs .active {
    border-left: 2px solid #1a1a1a;
    background: linear-gradient(#626262, #5b5b5b);
  }

  .info {
    width: 253px;
    height: 42px;
    line-height: 42px;
    border-radius: 8px;
    text-align: center;
    background: #323232;
    color: #a8a8a8;
    margin-right: 6px;
  }

  .roll-head {
    flex: none;
    display: grid;
    grid-template-columns: 554px 1fr;
    height: 90px;
    border-bottom: 2px solid #000;
  }

  .region-info {
    display: flex;
    align-items: center;
    padding: 0 17px 6px 20px;
    border-right: 2px solid #000;
    background: #505050;
  }

  .region-title {
    flex: 1;
    display: flex;
    flex-direction: column;
    padding: 8px 2px 0 0;
    text-align: center;
  }

  .region-title strong {
    font-weight: 500;
    font-size: 25px;
  }

  .region-title span {
    font-size: 22px;
    color: #b5b5b5;
  }

  .roll-ruler {
    position: relative;
    display: flex;
    flex-direction: column;
    padding-left: 19px;
    background: #2e2e2e;
  }

  .roll-ruler::after {
    left: 6px;
    top: 46px;
  }

  .roll-cycle {
    flex: none;
    height: 46px;
    border-bottom: 2px solid #000;
    background: #c09b2d;
  }

  .roll-region {
    flex: 1;
    display: flex;
    padding: 2px 10px;
    gap: 16px;
    background: #fed604;
    color: #3a3200;
    font-size: 22px;
    line-height: 32px;
  }

  .play-box {
    position: relative;
    width: 29px;
    height: 22px;
    margin-top: 7px;
    border: 2px solid #3a3200;
  }

  .play-box::before {
    content: "";
    position: absolute;
    left: 8px;
    top: 3px;
    border-left: 11px solid #3a3200;
    border-top: 6px solid transparent;
    border-bottom: 6px solid transparent;
  }

  .roll-region .again {
    position: absolute;
    left: 2122px;
  }

  .roll-body {
    flex: 1;
    min-height: 0;
    display: grid;
    grid-template-columns: 475px 79px 1fr;
  }

  .local {
    padding: 263px 30px 0;
    background: #5f5f5f;
  }

  h3 {
    margin: 0;
    height: 36px;
    font-size: 25px;
    font-weight: 400;
    color: #a8a8a8;
  }

  .box {
    width: 414px;
    margin-bottom: 160px;
    border: 1px solid #404040;
    border-radius: 7px;
    background: #4d4d4d;
  }

  .box:nth-of-type(2) {
    margin-bottom: 150px;
  }

  .box-row {
    display: flex;
    height: 41px;
    border-bottom: 1px solid #333;
  }

  .box .select-wrap {
    height: 40px;
    border: 0;
    border-radius: 0;
    background: none;
    box-shadow: none;
  }

  .box .updown {
    stroke: #eee;
  }

  .box select {
    padding-left: 8px;
    text-align: center;
    text-align-last: center;
  }

  .grow {
    flex: 1;
  }

  .off {
    width: 122px;
  }

  .off + .grow {
    border-left: 2px solid #383838 !important;
  }

  .box-row button {
    width: 62px;
    border-left: 2px solid #383838;
  }

  .param {
    display: grid;
    grid-template-columns: 114px 208px 50px;
    column-gap: 16px;
    align-items: center;
    height: 36px;
    margin-bottom: 4px;
    color: #c8c8c8;
  }

  .param.first {
    margin: 6px 0 0;
  }

  .param span {
    text-align: right;
  }

  .param output,
  .velocity output {
    color: #f0f0f0;
    text-align: center;
  }

  .velocity {
    display: grid;
    grid-template-columns: 322px 1fr;
    align-items: center;
    height: 50px;
    padding: 0 4px 0 19px;
  }

  .piano {
    width: 79px;
    height: 100%;
    border-left: 1px solid #000;
    border-right: 2px solid #000;
  }

  .piano text {
    fill: #333;
    font-size: 22px;
    font-weight: 600;
    text-anchor: end;
  }

  .roll {
    position: relative;
    overflow: hidden;
    border-bottom: 2px solid #1f8a2f;
  }

  .note {
    position: absolute;
    height: 34px;
    border: 2px solid #000;
    background-image: linear-gradient(rgb(255 255 255 / 12%), transparent 5px);
  }

  .note i {
    display: block;
    max-width: 100%;
    height: 4px;
    margin: 13px 0 0 7px;
    background: #eef5b4;
  }

  .ghost {
    border-color: #282828;
  }
</style>
